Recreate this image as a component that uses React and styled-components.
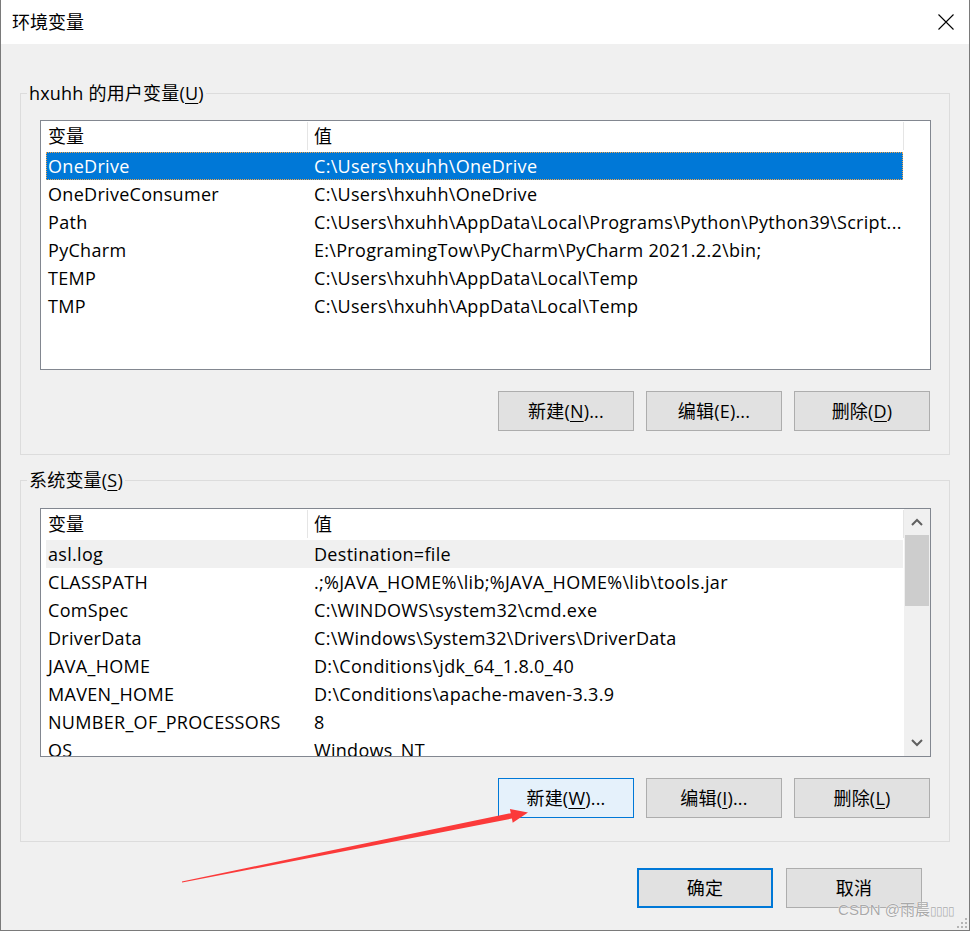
import React from "react";
import styled, { createGlobalStyle } from "styled-components";

const FONT = `"Open Sans", "Noto Sans CJK SC", sans-serif`;

const GlobalStyle = createGlobalStyle`
  html, body {
    margin: 0;
    padding: 0;
    background: #f0f0f0;
  }
  body {
    font-family: ${FONT};
    color: #000;
  }
  * {
    box-sizing: border-box;
  }
`;

const Window = styled.div`
  position: relative;
  width: 970px;
  height: 931px;
  background: #f0f0f0;
  border: 1px solid #7a7a7a;
  border-top: none;
  display: flex;
  flex-direction: column;
  overflow: hidden;
`;

const TitleBar = styled.div`
  height: 44px;
  flex: none;
  background: #fff;
  display: flex;
  align-items: center;
  justify-content: space-between;
  padding: 0 15px 0 11px;
`;

const Title = styled.span`
  font-size: 18px;
  line-height: 24px;
`;

const CloseBtn = styled.div`
  width: 16px;
  height: 16px;
  display: flex;
`;

const Body = styled.div`
  flex: 1;
  padding: 49px 19px 0 19px;
  display: flex;
  flex-direction: column;
`;

const Group = styled.div`
  position: relative;
  border: 1px solid #dcdcdc;
  margin-top: ${(p) => p.$mt || 0}px;
  padding: ${(p) => p.$pt}px 18px 23px 19px;
`;

const Caption = styled.span`
  position: absolute;
  top: -13px;
  left: 6px;
  padding: 0 2px;
  background: #f0f0f0;
  font-size: 18px;
  line-height: 24px;
  letter-spacing: 0.2px;
  white-space: nowrap;
`;

const Mn = styled.span`
  text-decoration: underline;
  text-underline-offset: 3px;
  text-decoration-thickness: 1px;
`;

const ListBox = styled.div`
  height: ${(p) => p.$h}px;
  border: 1px solid #828790;
  background: #fff;
  display: flex;
  overflow: hidden;
`;

const Table = styled.div`
  flex: 1;
  min-width: 0;
  padding-left: 5px;
  display: flex;
  flex-direction: column;
  overflow: hidden;
`;

const HeaderRow = styled.div`
  height: 31px;
  flex: none;
  display: flex;
`;

const HeadCell = styled.div`
  width: ${(p) => (p.$w ? `${p.$w}px` : "auto")};
  flex: ${(p) => (p.$w ? "none" : "1")};
  padding-left: ${(p) => p.$pl}px;
  border-right: 1px solid #e5e5e5;
  margin: 1px 0 2px;
  font-size: 18px;
  line-height: 28px;
  white-space: nowrap;
`;

const Row = styled.div`
  position: relative;
  height: 28px;
  flex: none;
  display: flex;
  margin-right: 1px;
  background: ${(p) =>
    p.$state === "selected" ? "#0078d7" : p.$state === "hover" ? "#f0f0f0" : "transparent"};
  color: ${(p) => (p.$state === "selected" ? "#fff" : "#000")};
  outline: ${(p) => (p.$state === "selected" ? "1px dotted #f2a54a" : "none")};
  outline-offset: -1px;
`;

const Cell = styled.div`
  width: ${(p) => (p.$w ? `${p.$w}px` : "auto")};
  flex: ${(p) => (p.$w ? "none" : "1")};
  min-width: 0;
  padding-left: ${(p) => p.$pl}px;
  font-size: 18px;
  line-height: 28px;
  letter-spacing: 0.3px;
  white-space: nowrap;
  overflow: hidden;
`;

const ScrollTrack = styled.div`
  width: 26px;
  flex: none;
  display: flex;
  flex-direction: column;
  background: ${(p) => (p.$empty ? "#fff" : "#f0f0f0")};
`;

const ScrollArrow = styled.div`
  height: 26px;
  flex: none;
  display: flex;
  align-items: center;
  justify-content: center;
`;

const Thumb = styled.div`
  height: 71px;
  flex: none;
  margin: 0 1px;
  background: #cdcdcd;
`;

const Spacer = styled.div`
  flex: 1;
`;

const ButtonRow = styled.div`
  display: flex;
  justify-content: flex-end;
  gap: 12px;
  margin-top: 21px;
  padding-right: ${(p) => p.$pr || 1}px;
`;

const Button = styled.div`
  width: 136px;
  height: 40px;
  display: flex;
  align-items: center;
  justify-content: center;
  background: ${(p) => (p.$hot ? "#e5f1fb" : "#e1e1e1")};
  border: ${(p) =>
    p.$primary ? "2px solid #0078d7" : p.$hot ? "1px solid #0078d7" : "1px solid #adadad"};
  font-size: 18px;
  line-height: 24px;
  letter-spacing: 0.2px;
  white-space: nowrap;
`;

const Footer = styled.div`
  display: flex;
  justify-content: flex-end;
  gap: 13px;
  padding: 26px 28px 0 0;
`;

const Watermark = styled.div`
  position: absolute;
  right: 15px;
  bottom: 10px;
  font-family: "Liberation Sans", "Noto Sans CJK SC", sans-serif;
  font-size: 15px;
  line-height: 17px;
  color: #a9a9a9;
  text-shadow: 0 0 1px #fff, 0 0 1px #fff;
  white-space: nowrap;
`;

const Boxes = styled.span`
  font-size: 12px;
  letter-spacing: -1px;
`;

const Grip = styled.svg`
  position: absolute;
  right: 1px;
  bottom: 1px;
`;

const Overlay = styled.svg`
  position: absolute;
  left: -1px;
  top: 0;
  pointer-events: none;
`;

const userVars = [
  ["OneDrive", "C:\\Users\\hxuhh\\OneDrive", "selected"],
  ["OneDriveConsumer", "C:\\Users\\hxuhh\\OneDrive"],
  ["Path", "C:\\Users\\hxuhh\\AppData\\Local\\Programs\\Python\\Python39\\Script..."],
  ["PyCharm", "E:\\ProgramingTow\\PyCharm\\PyCharm 2021.2.2\\bin;"],
  ["TEMP", "C:\\Users\\hxuhh\\AppData\\Local\\Temp"],
  ["TMP", "C:\\Users\\hxuhh\\AppData\\Local\\Temp"],
];

const sysVars = [
  ["asl.log", "Destination=file", "hover"],
  ["CLASSPATH", ".;%JAVA_HOME%\\lib;%JAVA_HOME%\\lib\\tools.jar"],
  ["ComSpec", "C:\\WINDOWS\\system32\\cmd.exe"],
  ["DriverData", "C:\\Windows\\System32\\Drivers\\DriverData"],
  ["JAVA_HOME", "D:\\Conditions\\jdk_64_1.8.0_40"],
  ["MAVEN_HOME", "D:\\Conditions\\apache-maven-3.3.9"],
  ["NUMBER_OF_PROCESSORS", "8"],
  ["OS", "Windows_NT"],
];

const Chevron = ({ up }) => (
  <svg width="12" height="8" viewBox="0 0 12 8">
    <path
      d={up ? "M1 7 L6 2 L11 7" : "M1 1 L6 6 L11 1"}
      fill="none"
      stroke="#606060"
      strokeWidth="2"
    />
  </svg>
);

const VarList = ({ rows, height, scroll }) => (
  <ListBox $h={height}>
    <Table>
      <HeaderRow>
        <HeadCell $w={262} $pl={2}>变量</HeadCell>
        <HeadCell $pl={6}>值</HeadCell>
      </HeaderRow>
      {rows.map(([name, value, state]) => (
        <Row key={name} $state={state}>
          <Cell $w={262} $pl={2}>{name}</Cell>
          <Cell $pl={6}>{value}</Cell>
        </Row>
      ))}
    </Table>
    {scroll ? (
      <ScrollTrack>
        <ScrollArrow>
          <Chevron up />
        </ScrollArrow>
        <Thumb />
        <Spacer />
        <ScrollArrow>
          <Chevron />
        </ScrollArrow>
      </ScrollTrack>
    ) : (
      <ScrollTrack $empty />
    )}
  </ListBox>
);

export default function App() {
  return (
    <>
      <GlobalStyle />
      <Window>
        <TitleBar>
          <Title>环境变量</Title>
          <CloseBtn>
            <svg width="16" height="16" viewBox="0 0 16 16">
              <path d="M0.5 0.5 L15.5 15.5 M15.5 0.5 L0.5 15.5" stroke="#000" strokeWidth="1.1" />
            </svg>
          </CloseBtn>
        </TitleBar>
        <Body>
          <Group $pt={26}>
            <Caption>
              hxuhh 的用户变量(<Mn>U</Mn>)
            </Caption>
            <VarList rows={userVars} height={250} />
            <ButtonRow>
              <Button>
                新建(<Mn>N</Mn>)...
              </Button>
              <Button>编辑(E)...</Button>
              <Button>
                删除(<Mn>D</Mn>)
              </Button>
            </ButtonRow>
          </Group>
          <Group $mt={25} $pt={27}>
            <Caption>
              系统变量(<Mn>S</Mn>)
            </Caption>
            <VarList rows={sysVars} height={249} scroll />
            <ButtonRow>
              <Button $hot>
                新建(<Mn>W</Mn>)...
              </Button>
              <Button>
                编辑(<Mn>I</Mn>)...
              </Button>
              <Button>
                删除(<Mn>L</Mn>)
              </Button>
            </ButtonRow>
          </Group>
          <Footer>
            <Button $primary>确定</Button>
            <Button>取消</Button>
          </Footer>
        </Body>
        <Watermark>
          CSDN @雨晨<Boxes>▯▯▯▯</Boxes>
        </Watermark>
        <Grip width="12" height="12" viewBox="0 0 12 12">
          <g fill="#b5b5b5">
            <rect x="9" y="1" width="2" height="2" />
            <rect x="5" y="5" width="2" height="2" />
            <rect x="9" y="5" width="2" height="2" />
            <rect x="1" y="9" width="2" height="2" />
            <rect x="5" y="9" width="2" height="2" />
            <rect x="9" y="9" width="2" height="2" />
          </g>
        </Grip>
        <Overlay width="970" height="931" viewBox="0 0 970 931">
          <polygon
            points="181.9,881.4 510.8,813.2 509.9,809 528,812.5 512.7,822.7 511.9,818.6 182.1,882.6"
            fill="#fb3a3a"
          />
        </Overlay>
      </Window>
    </>
  );
}
